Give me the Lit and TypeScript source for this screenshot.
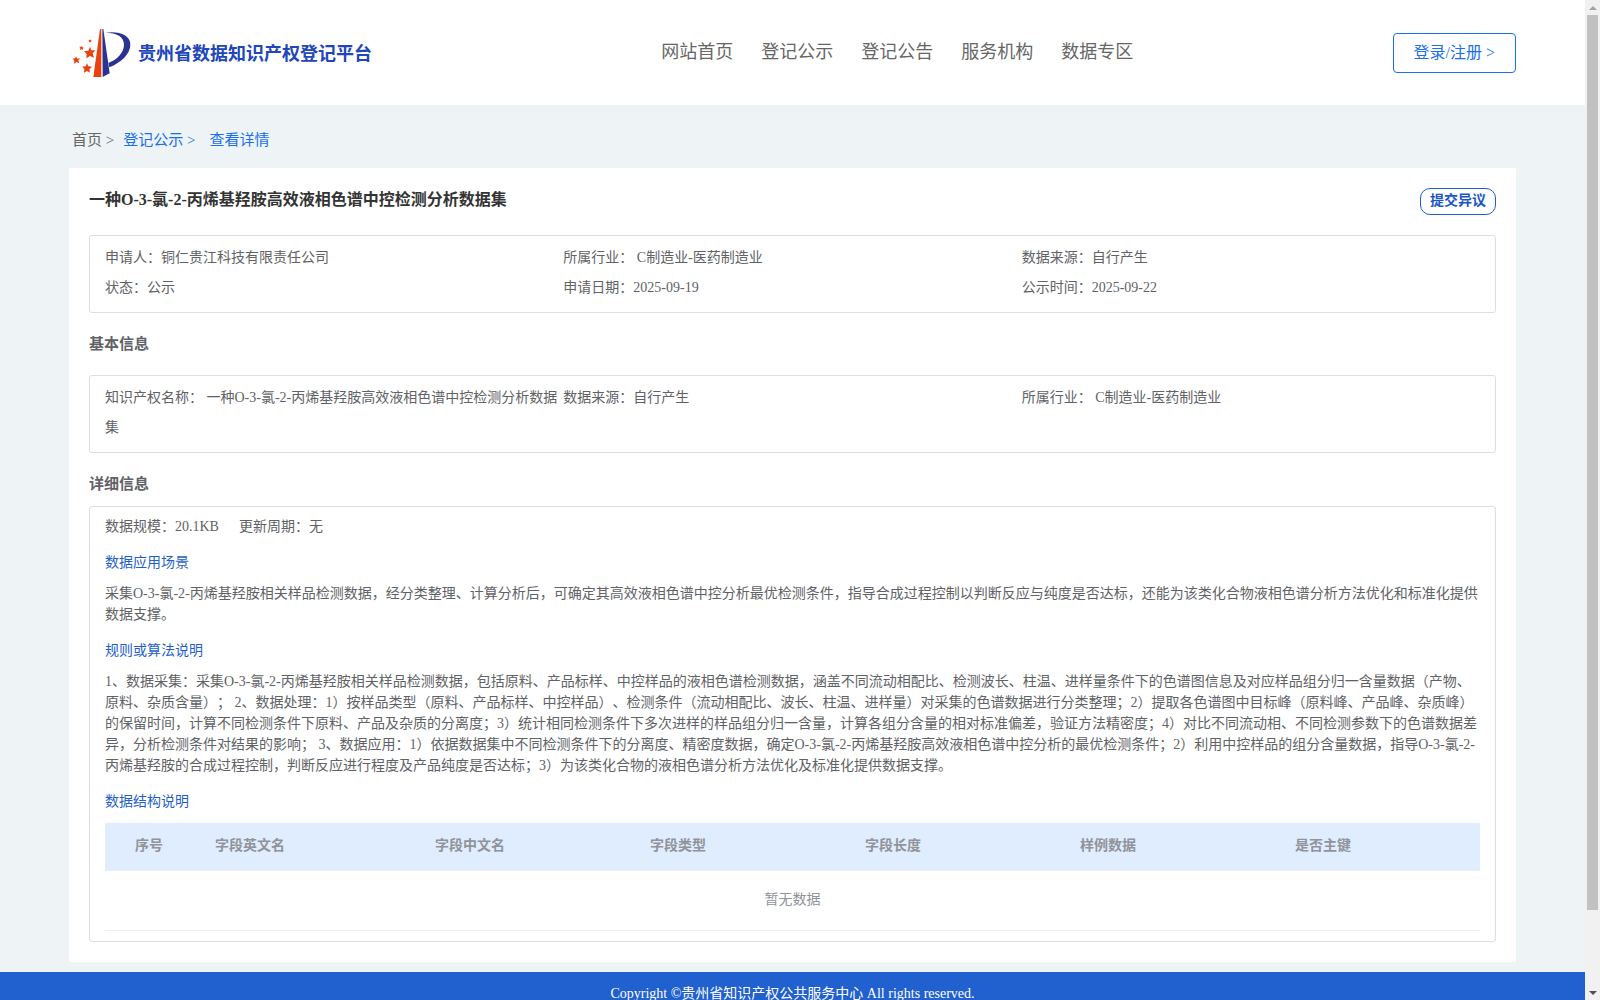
import { LitElement, html, css } from "lit";
import { customElement, property } from "lit/decorators.js";

interface Field {
  label: string;
  value: string;
}

const NAV = ["网站首页", "登记公示", "登记公告", "服务机构", "数据专区"];

const SUMMARY: Field[] = [
  { label: "申请人：", value: "铜仁贵江科技有限责任公司" },
  { label: "所属行业：", value: " C制造业-医药制造业" },
  { label: "数据来源：", value: "自行产生" },
  { label: "状态：", value: "公示" },
  { label: "申请日期：", value: "2025-09-19" },
  { label: "公示时间：", value: "2025-09-22" },
];

const BASIC: Field[] = [
  { label: "知识产权名称：", value: " 一种O-3-氯-2-丙烯基羟胺高效液相色谱中控检测分析数据集" },
  { label: "数据来源：", value: "自行产生" },
  { label: "所属行业：", value: " C制造业-医药制造业" },
];

const COLUMNS = [
  { title: "序号", width: 100 },
  { title: "字段英文名", width: 220 },
  { title: "字段中文名", width: 215 },
  { title: "字段类型", width: 215 },
  { title: "字段长度", width: 215 },
  { title: "样例数据", width: 215 },
  { title: "是否主键", width: 195 },
];

const SCENE =
  "采集O-3-氯-2-丙烯基羟胺相关样品检测数据，经分类整理、计算分析后，可确定其高效液相色谱中控分析最优检测条件，指导合成过程控制以判断反应与纯度是否达标，还能为该类化合物液相色谱分析方法优化和标准化提供数据支撑。";

const RULES =
  "1、数据采集：采集O-3-氯-2-丙烯基羟胺相关样品检测数据，包括原料、产品标样、中控样品的液相色谱检测数据，涵盖不同流动相配比、检测波长、柱温、进样量条件下的色谱图信息及对应样品组分归一含量数据（产物、原料、杂质含量）； 2、数据处理：1）按样品类型（原料、产品标样、中控样品）、检测条件（流动相配比、波长、柱温、进样量）对采集的色谱数据进行分类整理；2）提取各色谱图中目标峰（原料峰、产品峰、杂质峰）的保留时间，计算不同检测条件下原料、产品及杂质的分离度；3）统计相同检测条件下多次进样的样品组分归一含量，计算各组分含量的相对标准偏差，验证方法精密度；4）对比不同流动相、不同检测参数下的色谱数据差异，分析检测条件对结果的影响； 3、数据应用：1）依据数据集中不同检测条件下的分离度、精密度数据，确定O-3-氯-2-丙烯基羟胺高效液相色谱中控分析的最优检测条件；2）利用中控样品的组分含量数据，指导O-3-氯-2-丙烯基羟胺的合成过程控制，判断反应进行程度及产品纯度是否达标；3）为该类化合物的液相色谱分析方法优化及标准化提供数据支撑。";

@customElement("site-header")
export class SiteHeader extends LitElement {
  static styles = css`
    :host {
      display: block;
      background: #fff;
    }
    .bar {
      display: flex;
      justify-content: space-between;
      align-items: center;
      height: 105px;
      padding: 0 69px;
      box-sizing: border-box;
    }
    .brand {
      display: flex;
      align-items: center;
      gap: 7px;
      padding-left: 3px;
      color: #2146b9;
      font-size: 18px;
      font-weight: 700;
      line-height: 24px;
      text-decoration: none;
    }
    .name {
      padding-top: 3px;
    }
    .logo {
      width: 59px;
      height: 50px;
    }
    .nav {
      display: flex;
      gap: 28px;
      padding-left: 30px;
    }
    .nav a {
      color: #666;
      font-size: 18px;
      line-height: 28px;
      text-decoration: none;
      padding-bottom: 2px;
    }
    .login {
      height: 40px;
      padding: 0 20px;
      border: 1px solid #1a6ff0;
      border-radius: 4px;
      background: #fff;
      color: #1a6ff0;
      font: inherit;
      font-size: 16px;
    }
  `;

  render() {
    return html`
      <header class="bar">
        <a class="brand" href="#">
          <svg class="logo" viewBox="34 54 177 150" aria-hidden="true">
            <path fill="#e8430f" d="M118 57h4v144H98z" />
            <path fill="#2b3390" d="M125 57h3l19 133-21 11z" />
            <path
              fill="#2b3390"
              d="M134 68c40-6 74 6 75 34 1 30-28 56-63 70l-3-13c26-10 46-30 47-54 1-25-22-37-56-37z"
            />
            <g fill="#e8430f">
              <path d="M88 110l4 11 12 0-8 9 4 13-12-5-11 7 1-13-8-8 13-2z" />
              <path d="M46 139l4 7 9-1-6 6 3 9-8-4-8 5 1-9-5-6 8-1z" />
              <path d="M79 160l4 9 11 1-8 8 2 10-9-5-9 5 1-11-7-7 11-1z" />
              <path d="M64 107l1 5 5 1-4 3 1 5-4-3-6 2 2-5-3-5 5 1z" />
              <path d="M88 88l2 3 4 1-3 2 0 3-3-1-4 1 1-4-1-3 3 0z" />
            </g>
          </svg>
          <span class="name">贵州省数据知识产权登记平台</span>
        </a>
        <nav class="nav">${NAV.map((n) => html`<a href="#">${n}</a>`)}</nav>
        <button class="login" type="button">登录/注册 &gt;</button>
      </header>
    `;
  }
}

@customElement("field-box")
export class FieldBox extends LitElement {
  @property({ attribute: false }) fields: Field[] = [];

  static styles = css`
    :host {
      display: block;
      border: 1px solid #dcdfe0;
      border-radius: 3px;
      padding: 7px 15px 9px;
    }
    .grid {
      display: grid;
      grid-template-columns: repeat(3, minmax(0, 1fr));
      margin: 0;
      padding: 0;
      list-style: none;
    }
    .item {
      line-height: 30px;
    }
  `;

  render() {
    return html`
      <ul class="grid">
        ${this.fields.map((f) => html`<li class="item">${f.label + f.value}</li>`)}
      </ul>
    `;
  }
}

@customElement("structure-table")
export class StructureTable extends LitElement {
  static styles = css`
    :host {
      display: block;
      margin-top: 11px;
    }
    .table {
      width: 100%;
      table-layout: fixed;
      border-collapse: separate;
      border-spacing: 0;
      color: #909399;
    }
    th {
      height: 48px;
      padding: 0 10px 2px;
      box-sizing: border-box;
      background: #e0edff;
      text-align: left;
      font-weight: 700;
      line-height: 23px;
      border-bottom: 1px solid #ebeef5;
    }
    th:first-child {
      padding-left: 30px;
    }
    td {
      height: 60px;
      padding: 0 0 2px;
      box-sizing: border-box;
      text-align: center;
      border-bottom: 1px solid #ebeef5;
    }
  `;

  render() {
    return html`
      <table class="table">
        <colgroup>
          ${COLUMNS.map((c) => html`<col style="width:${c.width}px" />`)}
        </colgroup>
        <thead>
          <tr>
            ${COLUMNS.map((c) => html`<th scope="col">${c.title}</th>`)}
          </tr>
        </thead>
        <tbody>
          <tr>
            <td colspan=${COLUMNS.length}>暂无数据</td>
          </tr>
        </tbody>
      </table>
    `;
  }
}

@customElement("app-root")
export class AppRoot extends LitElement {
  static styles = css`
    :host {
      display: flex;
      height: 100vh;
      overflow: hidden;
      background: #eef3f6;
      color: #606266;
      font-family: "Liberation Serif", "Noto Sans CJK SC", serif;
      font-size: 14px;
      line-height: 21px;
      text-spacing-trim: space-all;
    }
    .page {
      flex: 1;
      min-width: 0;
      overflow: hidden;
    }
    .crumbs {
      display: flex;
      height: 63px;
      box-sizing: border-box;
      padding: 24px 72px 0;
      font-size: 15px;
      line-height: 22px;
      white-space: pre;
    }
    .crumbs a {
      color: #666;
      text-decoration: none;
      margin-right: 9px;
    }
    .crumbs .on {
      color: #1a6ff0;
      margin-right: 14px;
    }
    .card {
      margin: 0 69px 10px;
      padding: 20px;
      background: #fff;
    }
    .head {
      display: flex;
      justify-content: space-between;
      align-items: flex-start;
      height: 47px;
    }
    .title {
      margin: 0;
      color: #333;
      font-size: 16px;
      line-height: 24px;
    }
    .objection {
      height: 27px;
      padding: 0 9px 2px;
      border: 1px solid #1f5fcd;
      border-radius: 10px;
      background: #fff;
      color: #1a56c4;
      font: inherit;
      font-weight: 700;
      line-height: 21px;
    }
    .section {
      margin: 0;
      padding-top: 20px;
      font-size: 15px;
      line-height: 22px;
    }
    .section.basic {
      padding-bottom: 20px;
    }
    .section.detail {
      padding-bottom: 11px;
    }
    .panel {
      border: 1px solid #dcdfe0;
      border-radius: 3px;
      padding: 9px 15px 10px;
    }
    .meta {
      display: flex;
      gap: 20px;
    }
    .sub {
      margin: 15px 0 10px;
      color: #1f5fcd;
      font-size: 14px;
      font-weight: 400;
    }
    .text {
      margin: 0;
    }
    .foot {
      height: 200px;
      padding-top: 11px;
      box-sizing: border-box;
      background: #2160cf;
      color: #fff;
      text-align: center;
    }
    .scroll {
      display: flex;
      flex-direction: column;
      width: 15px;
      background: #f1f1f1;
    }
    .arrow {
      width: 15px;
      height: 15px;
    }
    .thumb {
      flex: 12;
      margin: 0 2px;
      background: #c1c1c1;
    }
    .rest {
      flex: 1;
    }
  `;

  render() {
    return html`
      <div class="page">
        <site-header></site-header>
        <nav class="crumbs" aria-label="breadcrumb"><a href="#">首页 &gt;</a><a class="on" href="#">登记公示 &gt;</a><a class="on" href="#">查看详情</a></nav>
        <main class="card">
          <div class="head">
            <h1 class="title">一种O-3-氯-2-丙烯基羟胺高效液相色谱中控检测分析数据集</h1>
            <button class="objection" type="button">提交异议</button>
          </div>
          <field-box .fields=${SUMMARY}></field-box>
          <h2 class="section basic">基本信息</h2>
          <field-box .fields=${BASIC}></field-box>
          <h2 class="section detail">详细信息</h2>
          <section class="panel">
            <div class="meta"><span>数据规模：20.1KB</span><span>更新周期：无</span></div>
            <h3 class="sub">数据应用场景</h3>
            <p class="text">${SCENE}</p>
            <h3 class="sub">规则或算法说明</h3>
            <p class="text">${RULES}</p>
            <h3 class="sub">数据结构说明</h3>
            <structure-table></structure-table>
          </section>
        </main>
        <footer class="foot">Copyright ©贵州省知识产权公共服务中心 All rights reserved.</footer>
      </div>
      <div class="scroll" aria-hidden="true">
        <svg class="arrow" viewBox="0 0 15 15"><path fill="#a3a3a3" d="M4 10l4-4 4 4z" /></svg>
        <div class="thumb"></div>
        <div class="rest"></div>
        <svg class="arrow" viewBox="0 0 15 15"><path fill="#505050" d="M4 6h8l-4 4z" /></svg>
      </div>
    `;
  }
}
